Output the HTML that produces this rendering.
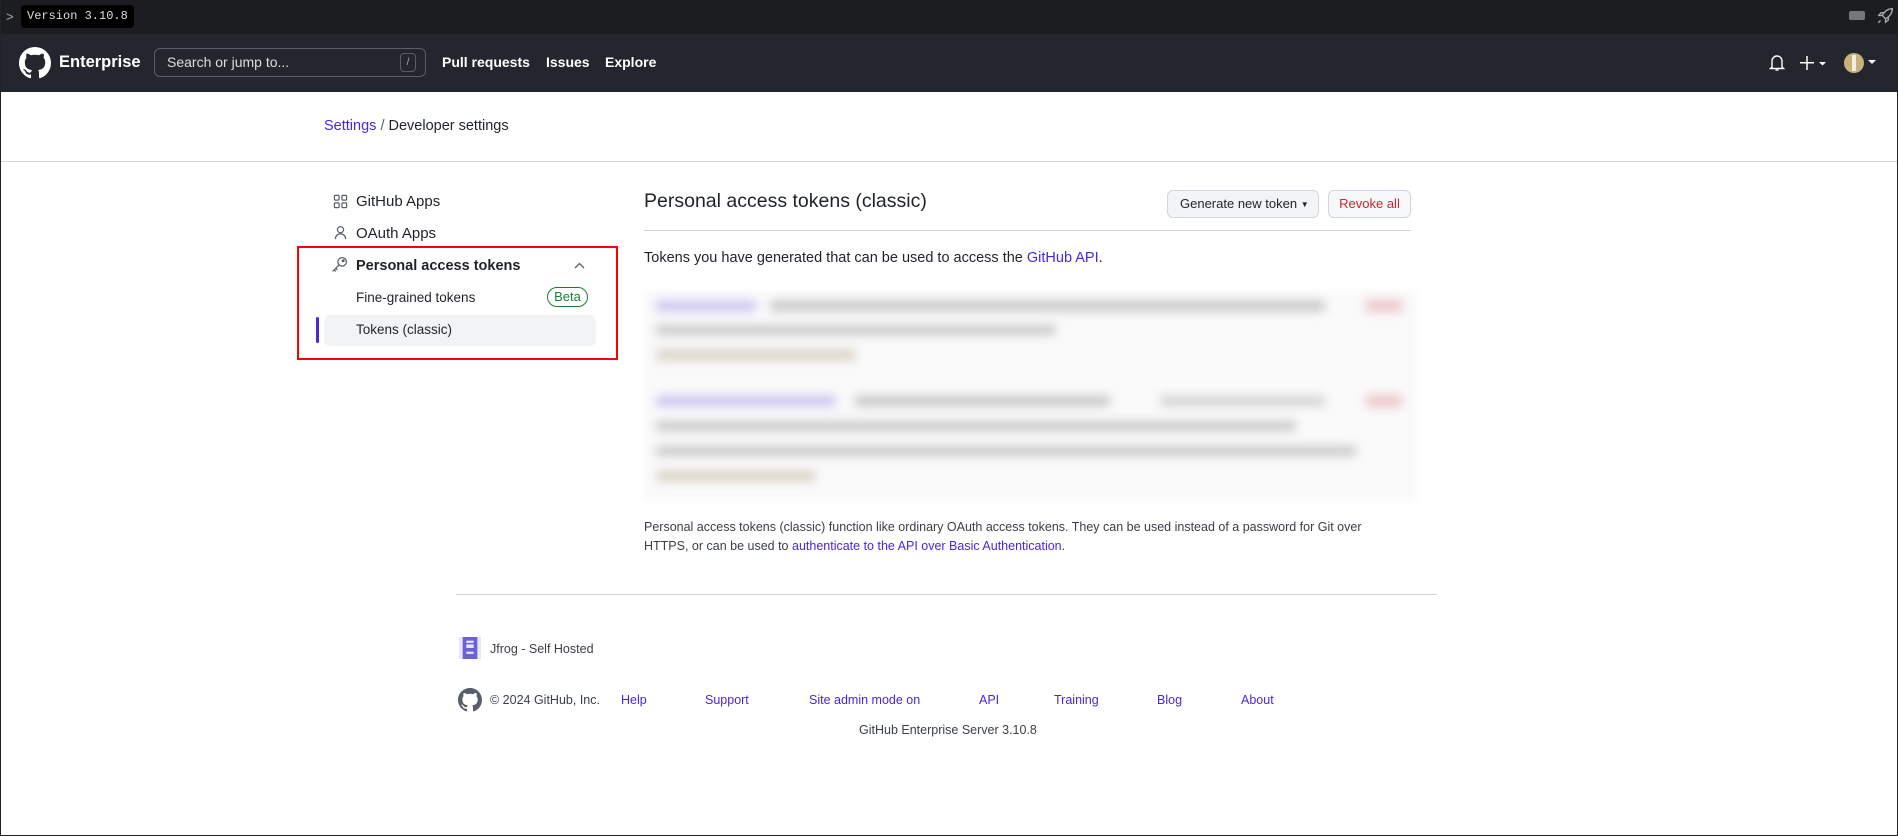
<!DOCTYPE html>
<html><head><meta charset="utf-8"><style>
*{box-sizing:border-box;margin:0;padding:0}
body{width:1898px;height:836px;position:relative;overflow:hidden;background:#fff;font-family:"Liberation Sans",Arial,sans-serif;color:#1f2328;font-size:14px}
.a{position:absolute;white-space:nowrap}
.lnk{color:#4a26d9}
.blur{position:absolute;filter:blur(5px);border-radius:3px}
</style></head><body>
<div class="a" style="left:0;top:0;width:1898px;height:34px;background:#1c1d21"></div>
<div class="a" style="left:6px;top:9px;color:#aaa;font-size:13px">&gt;</div>
<div class="a" style="left:21px;top:5px;height:23px;padding:0 6px;background:#000;border-radius:4px;color:#ddd;font-family:'Liberation Mono',monospace;font-size:12px;line-height:23px">Version 3.10.8</div>
<div class="a" style="left:1849px;top:11px;width:16px;height:9px;background:#777;border-radius:2px"></div>
<svg class="a" style="left:1876px;top:6px" width="18" height="20" viewBox="0 0 16 16" fill="none" stroke="#aaa" stroke-width="1.2"><path d="M14.5 1.5c-4 0-7 2.5-9 6l3 3c3.5-2 6-5 6-9zM5.5 7.5l-3 0 2-2.5h3M8.5 10.5v3l2.5-2v-3M4 12l-2 2"/></svg>
<div class="a" style="left:0;top:34px;width:1898px;height:58px;background:#24262e"></div>
<svg class="a" style="left:19px;top:47px" width="32" height="32" viewBox="0 0 16 16" fill="#fff"><path d="M8 0C3.58 0 0 3.58 0 8c0 3.54 2.29 6.53 5.47 7.590.4.07.55-.17.55-.38 0-.19-.01-.82-.01-1.49-2.01.37-2.53-.49-2.69-.94-.09-.23-.48-.94-.82-1.13-.28-.15-.68-.52-.01-.53.63-.01 1.08.58 1.23.82.72 1.21 1.87.87 2.33.66.07-.52.28-.87.51-1.07-1.78-.2-3.64-.89-3.64-3.95 0-.87.31-1.59.82-2.15-.08-.2-.36-1.02.08-2.12 0 0 .67-.21 2.2.82.64-.18 1.32-.27 2-.27.68 0 1.36.09 2 .27 1.53-1.04 2.2-.82 2.2-.82.44 1.1.16 1.92.08 2.12.51.56.82 1.27.82 2.15 0 3.07-1.87 3.75-3.65 3.95.29.25.54.73.54 1.48 0 1.07-.01 1.93-.01 2.2 0 .21.15.46.55.38A8.013 8.013 0 0016 8c0-4.42-3.58-8-8-8z"/></svg>
<div class="a" style="left:59px;top:53px;color:#fff;font-weight:bold;font-size:16.5px">Enterprise</div>
<div class="a" style="left:154px;top:48px;width:272px;height:29px;border:1px solid #5a5d66;border-radius:6px"></div>
<div class="a" style="left:167px;top:54px;color:#ddd;font-size:14px">Search or jump to...</div>
<div class="a" style="left:400px;top:53px;width:16px;height:19px;border:1px solid #5a5d66;border-radius:4px;color:#aaa;font-size:10px;text-align:center;line-height:17px">/</div>
<div class="a" style="left:442px;top:54px;color:#fff;font-weight:bold;font-size:14px">Pull requests</div>
<div class="a" style="left:546px;top:54px;color:#fff;font-weight:bold;font-size:14px">Issues</div>
<div class="a" style="left:605px;top:54px;color:#fff;font-weight:bold;font-size:14px">Explore</div>
<svg class="a" style="left:1769px;top:54px" width="16" height="18" viewBox="0 0 16 18" fill="none" stroke="#fff" stroke-width="1.4"><path d="M3 13V7a5 5 0 0110 0v6l1.5 1.5h-13z"/><path d="M6.5 16h3"/></svg>
<svg class="a" style="left:1800px;top:56px" width="30" height="14" viewBox="0 0 30 14" fill="#fff"><rect x="0" y="6" width="14" height="1.5"/><rect x="6.25" y="0" width="1.5" height="14"/><path d="M19 6h7l-3.5 3.5z"/></svg>
<div class="a" style="left:1844px;top:53px;width:20px;height:20px;border-radius:50%;background:#c8b27c"></div>
<div class="a" style="left:1852px;top:55px;width:4px;height:16px;background:#f2ede0"></div>
<svg class="a" style="left:1868px;top:60px" width="9" height="6" viewBox="0 0 9 6" fill="#fff"><path d="M0 0h8l-4 4z"/></svg>

<div class="a" style="left:324px;top:118px;font-size:14.5px"><span class="lnk">Settings</span> <span style="color:#57606a">/</span> Developer settings</div>
<div class="a" style="left:0;top:161px;width:1898px;height:1px;background:#d0d7de"></div>

<svg class="a" style="left:333px;top:194px" width="15" height="15" viewBox="0 0 16 16" fill="none" stroke="#57606a" stroke-width="1.3"><rect x="1.5" y="1.5" width="5" height="5" rx="1"/><rect x="9.5" y="1.5" width="5" height="5" rx="1"/><rect x="1.5" y="9.5" width="5" height="5" rx="1"/><rect x="9.5" y="9.5" width="5" height="5" rx="1"/></svg>
<div class="a" style="left:356px;top:193px;font-size:15px">GitHub Apps</div>
<svg class="a" style="left:333px;top:225px" width="15" height="15" viewBox="0 0 16 16" fill="none" stroke="#57606a" stroke-width="1.3"><circle cx="8" cy="5" r="3.3"/><path d="M2.5 15c0-3.5 2.5-5.5 5.5-5.5s5.5 2 5.5 5.5"/></svg>
<div class="a" style="left:356px;top:225px;font-size:15px">OAuth Apps</div>
<div class="a" style="left:297px;top:246px;width:321px;height:114px;border:2px solid #f00"></div>
<svg class="a" style="left:331px;top:256px" width="17" height="17" viewBox="0 0 16 16" fill="none" stroke="#57606a" stroke-width="1.2"><circle cx="10.5" cy="5.5" r="4"/><path d="M7.5 8.5L1.5 14.5M3 13l1.5 1.5M4.5 11.5l1.5 1.5"/><circle cx="11.5" cy="4.5" r=".8" fill="#57606a"/></svg>
<div class="a" style="left:356px;top:258px;font-size:14.5px;font-weight:bold">Personal access tokens</div>
<svg class="a" style="left:574px;top:262px" width="11" height="7" viewBox="0 0 11 7" fill="none" stroke="#57606a" stroke-width="1.3"><path d="M1 6l4.5-4.5L10 6"/></svg>
<div class="a" style="left:356px;top:290px;font-size:13.5px">Fine-grained tokens</div>
<div class="a" style="left:547px;top:287px;width:41px;height:20px;border:1px solid #1a7f37;border-radius:10px;color:#1a7f37;font-size:13px;text-align:center;line-height:18px">Beta</div>
<div class="a" style="left:324px;top:315px;width:272px;height:31px;background:#f2f3f5;border-radius:6px"></div>
<div class="a" style="left:316px;top:317px;width:3px;height:26px;background:#4a26d9;border-radius:2px"></div>
<div class="a" style="left:356px;top:322px;font-size:13.5px">Tokens (classic)</div>

<div class="a" style="left:644px;top:190px;font-size:19.5px">Personal access tokens (classic)</div>
<div class="a" style="left:1167px;top:190px;width:152px;height:28px;background:#f3f4f6;border:1px solid #d0d7de;border-radius:6px;font-size:13px;line-height:26px;padding-left:12px">Generate new token <span style="font-size:8px;vertical-align:1px">▼</span></div>
<div class="a" style="left:1328px;top:190px;width:83px;height:28px;background:#f6f8fa;border:1px solid #d0d7de;border-radius:6px;font-size:13px;line-height:26px;text-align:center;color:#cf222e">Revoke all</div>
<div class="a" style="left:644px;top:230px;width:767px;height:1px;background:#d0d7de"></div>
<div class="a" style="left:644px;top:250px;font-size:14.5px">Tokens you have generated that can be used to access the <span class="lnk">GitHub API</span>.</div>

<div class="a" style="left:644px;top:290px;width:772px;height:212px;background:#fafafa;filter:blur(3px)"></div>
<div class="blur" style="left:656px;top:301px;width:100px;height:10px;background:#c9c0f2"></div>
<div class="blur" style="left:770px;top:301px;width:555px;height:10px;background:#c4c4c4"></div>
<div class="blur" style="left:1366px;top:300px;width:36px;height:12px;background:#ecc5c8"></div>
<div class="blur" style="left:656px;top:325px;width:400px;height:10px;background:#c8c8c8"></div>
<div class="blur" style="left:656px;top:350px;width:200px;height:10px;background:#d6d0c0"></div>
<div class="blur" style="left:656px;top:396px;width:180px;height:10px;background:#c9c0f2"></div>
<div class="blur" style="left:855px;top:396px;width:255px;height:10px;background:#c4c4c4"></div>
<div class="blur" style="left:1160px;top:396px;width:165px;height:10px;background:#d2d2d2"></div>
<div class="blur" style="left:1366px;top:395px;width:36px;height:12px;background:#ecc5c8"></div>
<div class="blur" style="left:656px;top:421px;width:640px;height:10px;background:#c8c8c8"></div>
<div class="blur" style="left:656px;top:446px;width:700px;height:10px;background:#c8c8c8"></div>
<div class="blur" style="left:656px;top:471px;width:160px;height:10px;background:#d6d0c0"></div>

<div class="a" style="left:644px;top:518px;font-size:12.5px;line-height:19px;color:#3a3f45">Personal access tokens (classic) function like ordinary OAuth access tokens. They can be used instead of a password for Git over<br>HTTPS, or can be used to <span class="lnk">authenticate to the API over Basic Authentication</span>.</div>

<div class="a" style="left:456px;top:594px;width:981px;height:1px;background:#d0d7de"></div>
<svg class="a" style="left:459px;top:637px" width="22" height="22" viewBox="0 0 6 6"><rect width="6" height="6" fill="#e8e8f5"/><path d="M1 0h4v2H1zM1 2h1v1H1zM4 2h1v1H4zM1 3h4v3H1z" fill="#6a60d8"/><rect x="2" y="1" width="2" height=".6" fill="#e8e8f5"/><rect x="2" y="4" width="2" height=".6" fill="#e8e8f5"/></svg>
<div class="a" style="left:490px;top:642px;font-size:12.5px;color:#3a3f45">Jfrog - Self Hosted</div>
<svg class="a" style="left:458px;top:688px" width="24" height="24" viewBox="0 0 16 16" fill="#57606a"><path d="M8 0C3.58 0 0 3.58 0 8c0 3.54 2.29 6.53 5.47 7.59.4.07.55-.17.55-.38 0-.19-.01-.82-.01-1.49-2.01.37-2.53-.49-2.69-.94-.09-.23-.48-.94-.82-1.13-.28-.15-.68-.52-.01-.53.63-.01 1.08.58 1.23.82.72 1.21 1.87.87 2.33.66.07-.52.28-.87.51-1.07-1.78-.2-3.64-.89-3.64-3.95 0-.87.31-1.59.82-2.15-.08-.2-.36-1.02.08-2.12 0 0 .67-.21 2.2.82.64-.18 1.32-.27 2-.27.68 0 1.36.09 2 .27 1.53-1.04 2.2-.82 2.2-.82.44 1.1.16 1.92.08 2.12.51.56.82 1.27.82 2.15 0 3.07-1.87 3.75-3.65 3.95.29.25.54.73.54 1.48 0 1.07-.01 1.93-.01 2.2 0 .21.15.46.55.38A8.013 8.013 0 0016 8c0-4.42-3.58-8-8-8z"/></svg>
<div class="a" style="left:490px;top:693px;font-size:12.5px;color:#3a3f45">© 2024 GitHub, Inc.</div>
<div class="a lnk" style="left:621px;top:693px;font-size:12.5px">Help</div>
<div class="a lnk" style="left:705px;top:693px;font-size:12.5px">Support</div>
<div class="a lnk" style="left:809px;top:693px;font-size:12.5px">Site admin mode on</div>
<div class="a lnk" style="left:979px;top:693px;font-size:12.5px">API</div>
<div class="a lnk" style="left:1054px;top:693px;font-size:12.5px">Training</div>
<div class="a lnk" style="left:1157px;top:693px;font-size:12.5px">Blog</div>
<div class="a lnk" style="left:1241px;top:693px;font-size:12.5px">About</div>
<div class="a" style="left:859px;top:723px;font-size:12.5px;color:#3a3f45">GitHub Enterprise Server 3.10.8</div>
<div class="a" style="left:0;top:0;width:1898px;height:836px;border:1px solid #222;border-top:none"></div>
</body></html>
